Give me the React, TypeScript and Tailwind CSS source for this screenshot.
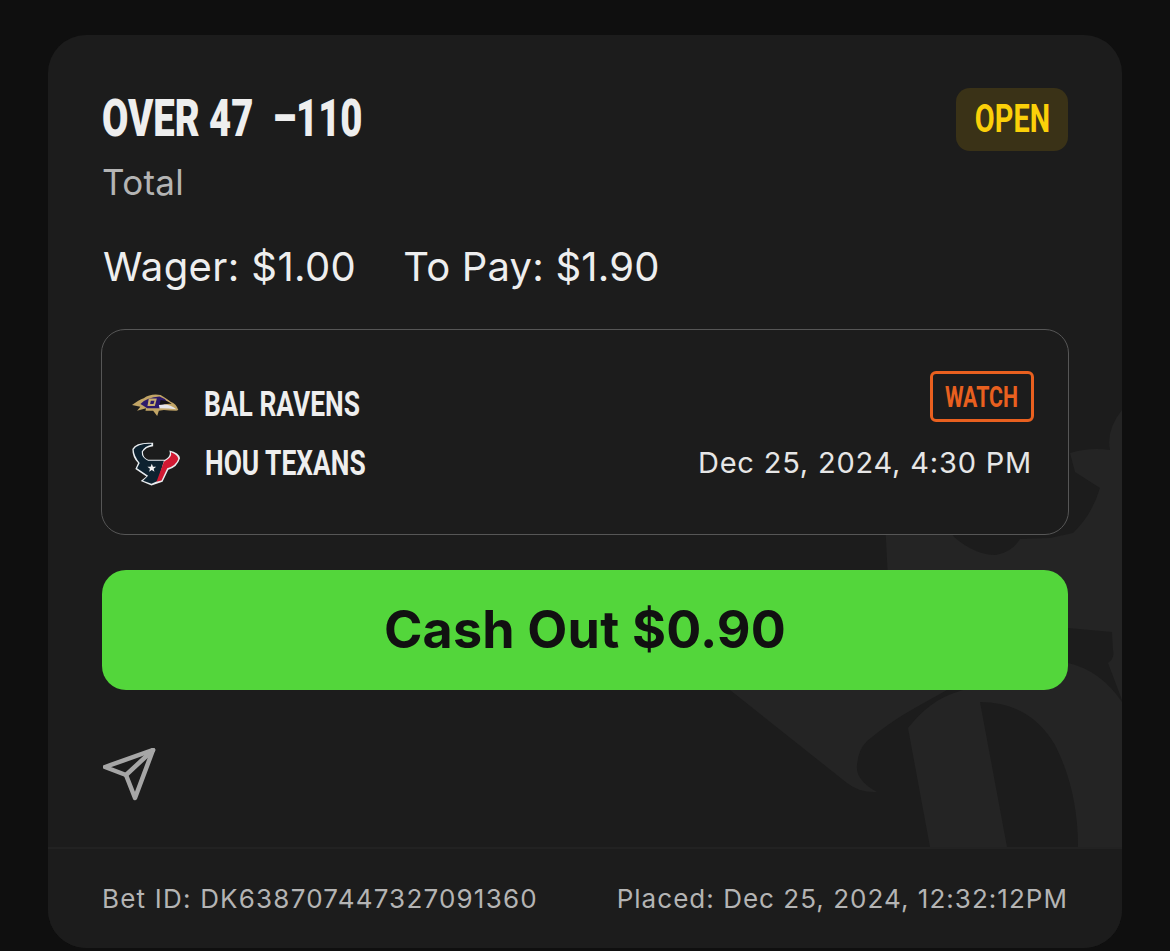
const CONDENSED = "font-['Roboto',sans-serif]";

function Watermark() {
  return (
    <svg className="absolute left-0 top-0" width="1074" height="913" viewBox="48 35 1074 913" fill="#242424">
      <path d="M885 520 L950 530 L954 537 Q975 555 996 555 Q1012 552 1020 539 L1050 538 L1073 533 Q1092 515 1100 488 L1075 472 L1070 453 Q1090 447 1110 450 Q1106 430 1122 410 L1122 700 L1108 663 Q1115 658 1113 650 L1112 632 L1068 628 L890 620 Z" />
      <path d="M730 690 L847 783 Q860 793 877 792 Q855 780 857 765 Q858 750 867 741 Q890 722 913 709 L947 690 Z" />
      <path d="M908 728 Q930 700 957 692 L1020 670 Q1045 663 1068 663 Q1100 670 1122 702 L1122 847 L1078 847 Q1078 790 1055 745 Q1030 702 980 702 L1007 847 L930 847 Z" />
    </svg>
  );
}

function RavensLogo() {
  return (
    <svg width="47" height="24" viewBox="130 120 140 70">
      <path d="M130 155 Q150 140 165 135 Q185 120 215 125 Q240 140 245 145 Q262 150 268 170 L262 172 Q240 172 225 170 L210 172 L205 188 L193 172 L170 172 L172 165 L145 172 L155 160 Z" fill="#c2a566" />
      <path d="M155 152 Q175 132 212 130 Q228 135 238 148 Q225 150 212 165 L175 165 L165 158 Z" fill="#2d1a6b" />
      <path d="M180 136 L204 136 L198 158 L176 158 Z" fill="#c9ae70" />
      <path d="M186 142 L197 142 L194 152 L184 152 Z" fill="#2d1a6b" />
      <path d="M215 140 Q238 142 248 152 Q230 150 212 158 Z" fill="#141414" />
      <path d="M210 155 Q240 148 262 168 Q240 165 212 165 Z" fill="#e6e6ea" />
    </svg>
  );
}

function TexansLogo() {
  return (
    <svg width="48" height="44" viewBox="127 270 143 130">
      <path d="M190 272 Q140 268 128 290 Q128 315 145 332 L137 350 L170 372 L153 386 L185 399 L218 388 L235 352 Q262 345 270 318 Q268 302 238 295 Q245 312 225 322 L175 322 Q158 316 160 298 Q168 285 190 282 Z" fill="#e9edf0" />
      <path d="M185 275 Q142 274 132 292 Q133 312 150 332 L142 348 L175 370 L160 385 L185 394 L205 385 L222 325 L175 325 Q155 318 156 298 Q165 282 185 278 Z" fill="#0d2230" />
      <path d="M222 328 Q248 315 243 300 Q262 306 265 320 Q258 340 232 348 L215 384 L200 388 Z" fill="#d11a33" />
      <path d="M186 334 L189.5 343 L199 343 L191.5 349 L194 358 L186 353 L178 358 L180.5 349 L173 343 L182.5 343 Z" fill="#f2f2f2" />
    </svg>
  );
}

function SendIcon() {
  return (
    <svg width="54" height="54" viewBox="103 748 54 54" fill="none" stroke="#a6a6a6" strokeWidth="4.5" strokeLinejoin="round" strokeLinecap="round" className="mt-[58px] ml-[1px]">
      <path d="M153 750 L105 767 L126 775 L135 798 Z" />
      <path d="M153 750 L126 775" />
    </svg>
  );
}

export default function App() {
  return (
    <div className="h-[951px] w-[1170px] overflow-hidden bg-[#0f0f0f] pl-[48px] pt-[35px] font-['Inter',sans-serif]">
      <div className="relative flex h-[913px] w-[1074px] flex-col overflow-hidden rounded-[38px] bg-[#1c1c1c]">
        <Watermark />

        <div className="relative flex h-[812px] flex-col px-[54px] pt-[53px]">
          <div className="flex items-start justify-between">
            <div>
              <div className={`${CONDENSED} h-[62px] origin-left scale-x-[0.735] whitespace-nowrap text-[52px] leading-[62px] font-black text-[#eeeeee]`}>
                OVER 47&nbsp;&nbsp;–110
              </div>
              <div className="mt-[12px] text-[35px] leading-[40px] tracking-[0.3px] text-[#b4b4b4]">Total</div>
            </div>
            <div className="flex h-[63px] w-[112px] items-center justify-center rounded-[14px] bg-[#3a3217]">
              <span className={`${CONDENSED} scale-x-[0.76] text-[38px] font-bold text-[#fbd009]`}>OPEN</span>
            </div>
          </div>

          <div className="mt-[42px] flex text-[40px] leading-[46px] text-[#eeeeee]">
            <span className="ml-[1px] tracking-[0.4px]">Wager: $1.00</span>
            <span className="ml-[47px] tracking-[0.2px]">To Pay: $1.90</span>
          </div>

          <div className="mt-[39px] -mx-[1px] flex h-[206px] items-center justify-between rounded-[24px] border border-[#565656] bg-[#1c1c1c] pl-[30px] pr-[34px]">
            <div className="mt-[5px] flex flex-col gap-[15px]">
              <div className="flex h-[44px] items-center gap-[25px]">
                <RavensLogo />
                <span className={`${CONDENSED} origin-left scale-x-[0.765] whitespace-nowrap text-[34.5px] font-bold text-[#eeeeee]`}>BAL RAVENS</span>
              </div>
              <div className="flex h-[44px] items-center gap-[25px]">
                <TexansLogo />
                <span className={`${CONDENSED} origin-left scale-x-[0.765] whitespace-nowrap text-[34.5px] font-bold text-[#eeeeee]`}>HOU TEXANS</span>
              </div>
            </div>
            <div className="mb-[12px] flex flex-col items-end gap-[23px]">
              <div className="flex h-[51px] w-[104px] items-center justify-center rounded-[6px] border-[3px] border-[#e9601f]">
                <span className={`${CONDENSED} -ml-[1px] scale-x-[0.71] text-[30px] font-bold text-[#e9601f]`}>WATCH</span>
              </div>
              <div className="pr-[2px] text-[29px] leading-[36px] tracking-[0.8px] text-[#e6e6e6]">Dec 25, 2024, 4:30 PM</div>
            </div>
          </div>

          <button className="mt-[35px] flex h-[120px] w-full items-center justify-center rounded-[24px] bg-[#53d63b] text-[52px] font-bold tracking-[0.2px] text-[#111111]">
            Cash Out $0.90
          </button>

          <SendIcon />
        </div>

        <div className="relative flex flex-1 items-center justify-between border-t-2 border-[#222222] bg-[#1c1c1c] px-[54px] text-[26px] text-[#b4b4b4]">
          <span className="tracking-[1.2px]">Bet ID: DK638707447327091360</span>
          <span className="tracking-[1.03px]">Placed: Dec 25, 2024, 12:32:12PM</span>
        </div>
      </div>
    </div>
  );
}
